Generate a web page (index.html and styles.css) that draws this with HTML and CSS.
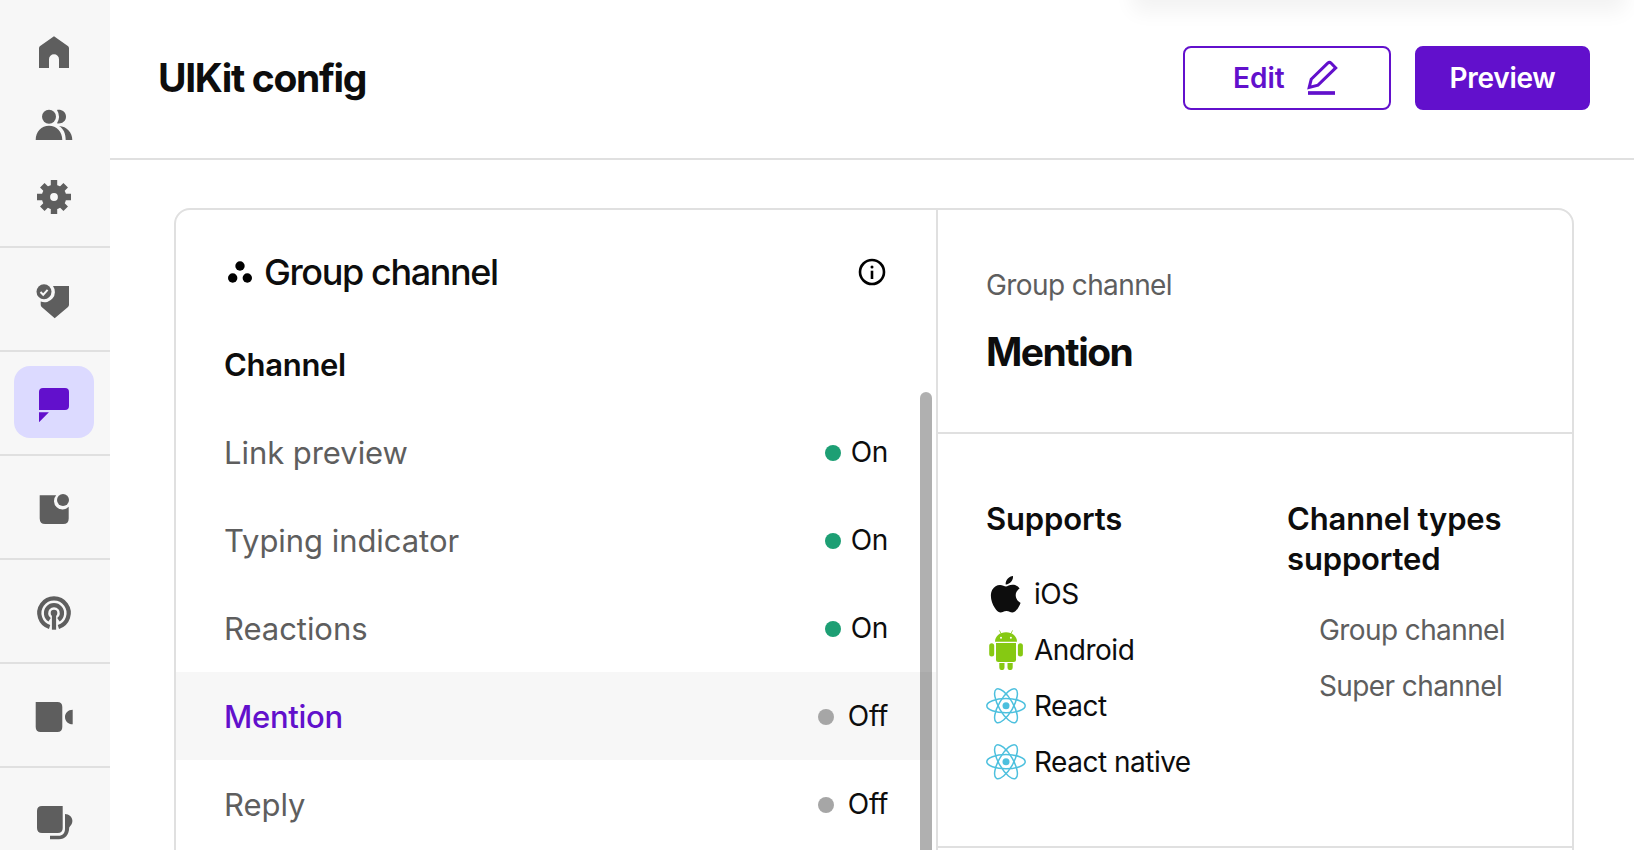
FILE: index.html
```html
<!DOCTYPE html>
<html lang="en">
<head>
<meta charset="utf-8">
<title>UIKit config</title>
<link rel="stylesheet" href="styles.css">
</head>
<body>
<svg class="defs" width="0" height="0" aria-hidden="true">
  <symbol id="react" viewBox="0 0 40 40">
    <g fill="none" stroke="#4dc0de" stroke-width="1.5">
      <ellipse cx="20" cy="19.7" rx="19.2" ry="7.1"/>
      <ellipse cx="20" cy="19.7" rx="19.2" ry="7.1" transform="rotate(60 20 19.7)"/>
      <ellipse cx="20" cy="19.7" rx="19.2" ry="7.1" transform="rotate(120 20 19.7)"/>
    </g>
    <circle cx="20" cy="19.7" r="3.5" fill="#4dc0de"/>
  </symbol>
</svg>
<div class="app">
  <nav class="sidebar">
    <div class="nav-group nav-group-first">
      <a class="nav-item"><svg class="icon" viewBox="0 0 40 40"><path d="M20 4.3 34.2 14.2Q35 15 35 16.2V36H25V27.3a5 5 0 0 0-10 0V36H5V16.2Q5 15 5.8 14.2z"/></svg></a>
      <a class="nav-item"><svg class="icon" viewBox="0 0 40 40"><circle cx="15" cy="12.7" r="7"/><path d="M1.7 36C1.7 27.5 7.5 21.7 15 21.7S28.3 27.5 28.3 36zM23 6C27.500 5.200 32 8 32 12.700S27.500 20.200 23 19.200Q27 12.700 23 6zM25 21.900C33 22.300 38.300 28.500 38.300 36H31.700C31.700 29.500 29.500 24.500 25 21.900z"/></svg></a>
      <a class="nav-item"><svg class="icon" viewBox="0 0 40 40"><g fill="none" stroke="#5e5e5e"><circle cx="20" cy="21" r="8.100" stroke-width="8.400"/><path stroke-width="6.400" d="M20 4v7M20 31v7M3 21h7M30 21h7M8.300 9.300l4 4M27.700 28.700l4 4M31.700 9.300l-4 4M12.300 28.700l-4 4"/></g></svg></a>
    </div>
    <div class="nav-group"><a class="nav-item"><svg class="icon" viewBox="0 0 40 40"><path d="M19 8H35V26.500Q35 28 34 29L20.700 40.300 7.700 29Q6.700 28 6.700 26.500V23.500A10.300 10.300 0 0 0 19 8z"/><circle cx="10" cy="13.700" r="7.500"/><path d="M6.500 14 9.200 16.700 13.600 11.800" fill="none" stroke="#f7f7f7" stroke-width="2"/></svg></a></div>
    <div class="nav-group"><a class="nav-item nav-item-active"><svg class="icon" viewBox="0 0 40 40"><path d="M9 6H31Q35 6 35 10V24Q35 28 31 28H5V10Q5 6 9 6zM5 30.300H14.900L5 40.300z"/></svg></a></div>
    <div class="nav-group"><a class="nav-item"><svg class="icon" viewBox="0 0 40 40"><path d="M5.700 9.300H22.200A8.200 8.200 0 0 0 34.700 20.700V32.500Q34.700 38 29.200 38H11.200Q5.700 38 5.700 32.500z"/><circle cx="29" cy="14" r="6"/></svg></a></div>
    <div class="nav-group"><a class="nav-item"><svg class="icon" viewBox="0 0 40 40"><g fill="none" stroke="#5e5e5e"><path stroke-width="4.200" d="M15.600 37.100A14.700 14.700 0 1 1 24.400 37.100"/><path stroke-width="4.200" d="M15.600 29.800A8 8 0 1 1 24.400 29.800"/><path stroke-width="4.200" d="M20 23V39.700"/></g><circle cx="20" cy="23" r="3.300"/></svg></a></div>
    <div class="nav-group"><a class="nav-item"><svg class="icon" viewBox="0 0 40 40"><path d="M1.700 8H23.300Q28.300 8 28.300 13V33Q28.300 38 23.300 38H6.700Q1.700 38 1.700 33zM38.700 15.700V30.300C34 30.300 31 27 31 23S34 15.700 38.700 15.700z"/></svg></a></div>
    <div class="nav-group"><a class="nav-item"><svg class="icon" viewBox="0 0 40 40"><path d="M8 8H28.700V30Q28.700 35 23.700 35H8Q3 35 3 30V13Q3 8 8 8zM31 16C35 16 38.400 19 38.400 23 38.400 26 36.500 27.500 35.200 29.500 35 37 31 41.200 25 41.200H16V37.800H24.500C28.500 37.800 31 35 31 31z"/></svg></a></div>
  </nav>

  <div class="page">
    <header class="header">
      <h1 class="title">UIKit config</h1>
      <button class="btn btn-outline"><span>Edit</span>
        <svg class="btn-icon" viewBox="0 0 40 40"><g fill="none" stroke="#6210cc"><path stroke-width="3" d="M6.200 29.400 8.200 21.300 24.700 5.100Q26.600 3.600 28.200 5.300L32.700 9.900 15 27.100z"/><path stroke-width="3.700" d="M5 35H32"/></g></svg>
      </button>
      <button class="btn btn-solid">Preview</button>
    </header>
    <main class="content">
      <div class="card">
        <section class="list-panel">
          <div class="list-head">
            <svg class="group-icon" viewBox="0 0 32 32"><circle cx="16" cy="10" r="4.700"/><circle cx="8.700" cy="22" r="4.700"/><circle cx="23.300" cy="22" r="4.700"/></svg>
            <h2 class="list-title">Group channel</h2>
            <svg class="info-icon" viewBox="0 0 32 32"><circle cx="16" cy="16" r="12" fill="none" stroke="#000" stroke-width="2.600"/><circle cx="16" cy="11" r="1.500"/><path d="M14.700 14.700h2.600V23h-2.600z"/></svg>
          </div>
          <h3 class="list-subtitle">Channel</h3>
          <ul class="rows">
            <li class="row"><span class="name">Link preview</span><span class="status on">On</span></li>
            <li class="row"><span class="name">Typing indicator</span><span class="status on">On</span></li>
            <li class="row"><span class="name">Reactions</span><span class="status on">On</span></li>
            <li class="row row-active"><span class="name">Mention</span><span class="status off">Off</span></li>
            <li class="row"><span class="name">Reply</span><span class="status off">Off</span></li>
          </ul>
          <div class="scrollbar"></div>
        </section>
        <section class="detail">
          <div class="detail-head">
            <p class="crumb">Group channel</p>
            <h2 class="detail-title">Mention</h2>
          </div>
          <div class="detail-body">
            <div>
              <h3 class="col-title">Supports</h3>
              <ul class="platforms">
                <li class="platform"><svg class="p-icon" viewBox="0 0 40 40"><path fill="#0d0d0d" transform="translate(1.500 2) scale(1.520)" d="M12.152 6.896c-.948 0-2.415-1.078-3.960-1.040-2.040.027-3.910 1.183-4.961 3.014-2.117 3.675-.546 9.103 1.519 12.090 1.013 1.454 2.208 3.090 3.792 3.039 1.520-.065 2.090-.987 3.935-.987 1.831 0 2.350.987 3.960.948 1.637-.026 2.676-1.480 3.676-2.948 1.156-1.688 1.636-3.325 1.662-3.415-.039-.013-3.182-1.221-3.220-4.857-.026-3.040 2.480-4.494 2.597-4.559-1.429-2.090-3.623-2.324-4.390-2.376-2-.156-3.675 1.090-4.610 1.090zM15.530 3.830c.843-1.012 1.400-2.427 1.245-3.830-1.207.052-2.662.805-3.532 1.818-.780.896-1.454 2.338-1.273 3.714 1.338.104 2.715-.688 3.559-1.701"/></svg>iOS</li>
                <li class="platform"><svg class="p-icon" viewBox="0 0 40 40"><g fill="#86c912"><path d="M9 11.700C9 6.500 13.500 2.300 20 2.300S31 6.500 31 11.700z"/><path d="M13.400.400 15 3.500M26.600.400 25 3.500" stroke="#86c912" stroke-width=".8"/><path d="M10 13H30V29.500Q30 32 27.500 32H12.500Q10 32 10 29.500z"/><rect x="3.200" y="13.300" width="5" height="13.200" rx="2.500"/><rect x="31.900" y="13.300" width="5" height="13.200" rx="2.500"/><path d="M13.300 33h5.200v4.500a2.600 2.600 0 0 1-5.200 0zM21.500 33h5.200v4.500a2.600 2.600 0 0 1-5.200 0z"/></g><circle cx="15" cy="7.700" r="1" fill="#fff"/><circle cx="24.900" cy="7.700" r="1" fill="#fff"/></svg>Android</li>
                <li class="platform"><svg class="p-icon"><use href="#react"/></svg>React</li>
                <li class="platform"><svg class="p-icon"><use href="#react"/></svg>React native</li>
              </ul>
            </div>
            <div>
              <h3 class="col-title">Channel types supported</h3>
              <ul class="types">
                <li class="type">Group channel</li>
                <li class="type">Super channel</li>
              </ul>
            </div>
          </div>
        </section>
      </div>
    </main>
  </div>
</div>
<div class="popover-shadow"></div>
</body>
</html>
```

FILE: styles.css
```css
* { box-sizing: border-box; }
body {
  margin: 0;
  height: 850px;
  overflow: hidden;
  position: relative;
  background: #fff;
  color: #0d0d0d;
  font-family: Inter, "Liberation Sans", sans-serif;
  font-size: 28px;
}
h1, h2, h3, p, ul { margin: 0; padding: 0; }
ul { list-style: none; }
.defs { position: absolute; }
.app { display: flex; height: 850px; overflow: hidden; }

.sidebar { width: 110px; flex: none; background: #f7f7f7; }
.nav-group { border-top: 2px solid #e0e0e0; padding: 14px 0 16px 14px; }
.nav-group-first { border-top: 0; padding: 16px 0 14px 14px; }
.nav-item {
  display: flex;
  align-items: center;
  justify-content: center;
  width: 80px;
  height: 72px;
  border-radius: 16px;
}
.nav-item-active { background: #dcdaff; }
.icon { width: 40px; height: 40px; fill: #5e5e5e; overflow: visible; }
.nav-item-active .icon { fill: #6210cc; }

.page { flex: 1; min-width: 0; }
.header {
  display: flex;
  align-items: center;
  height: 160px;
  padding: 0 44px 2px 48px;
  border-bottom: 2px solid #e0e0e0;
}
.title { flex: 1; padding-bottom: 1px; font-size: 39px; font-weight: 700; line-height: 48px; letter-spacing: -1.35px; }
.btn {
  display: flex;
  align-items: center;
  justify-content: center;
  height: 64px;
  border: 2px solid #6210cc;
  border-radius: 8px;
  font: 600 28px/40px Inter, "Liberation Sans", sans-serif;
}
.btn-outline {
  width: 208px;
  margin-right: 24px;
  padding: 0 46px 0 48px;
  justify-content: space-between;
  background: #fff;
  color: #6210cc;
}
.btn-solid { width: 175px; padding: 0; background: #6210cc; color: #fff; letter-spacing: -0.25px; }
.btn-icon { width: 40px; height: 40px; flex: none; }

.content { padding: 48px 60px 0 64px; }
.card {
  display: flex;
  height: 900px;
  border: 2px solid #e0e0e0;
  border-radius: 16px;
  overflow: hidden;
}
.list-panel { position: relative; width: 762px; flex: none; border-right: 2px solid #e0e0e0; }
.list-head { display: flex; align-items: center; height: 124px; padding: 0 48px; }
.group-icon { width: 32px; height: 32px; margin-right: 8px; }
.list-title { flex: 1; font-size: 36px; font-weight: 500; line-height: 48px; letter-spacing: -1.4px; }
.info-icon { width: 32px; height: 32px; }
.list-subtitle { padding: 11px 48px 0; height: 74px; font-size: 31px; font-weight: 600; line-height: 40px; letter-spacing: -0.3px; }
.rows { color: #5e5e5e; }
.row { display: flex; align-items: center; justify-content: space-between; height: 88px; padding: 0 48px; }
.row-active { background: #f7f7f7; color: #6210cc; }
.name { padding-top: 2px; font-size: 31px; line-height: 40px; letter-spacing: -0.05px; }
.row-active .name { font-weight: 500; letter-spacing: -0.3px; }
.status { display: flex; align-items: center; color: #0d0d0d; font-size: 28px; line-height: 40px; letter-spacing: -0.3px; }
.status::before { content: ""; width: 16px; height: 16px; margin: 2px 10px 0 0; border-radius: 50%; background: #1d9f74; }
.off::before { margin-right: 14px; background: #a6a6a6; }
.scrollbar {
  position: absolute;
  top: 182px;
  right: 4px;
  width: 12px;
  height: 1000px;
  border-radius: 6px;
  background: rgba(0, 0, 0, 0.31);
}

.detail { flex: 1; }
.detail-head { height: 224px; padding: 55px 48px 0; border-bottom: 2px solid #e0e0e0; }
.crumb { color: #5e5e5e; line-height: 40px; letter-spacing: -0.6px; }
.detail-title { margin-top: 23px; font-size: 39px; font-weight: 700; line-height: 48px; letter-spacing: -1.5px; }
.detail-body {
  display: grid;
  grid-template-columns: 1fr 1fr;
  gap: 64px;
  height: 414px;
  padding: 65px 48px 0;
  border-bottom: 2px solid #e0e0e0;
}
.col-title { font-size: 31px; font-weight: 600; line-height: 40px; letter-spacing: -0.15px; }
.platforms { display: grid; gap: 16px; margin-top: 35px; }
.platform { display: flex; align-items: center; gap: 8px; height: 40px; line-height: 40px; letter-spacing: -0.5px; white-space: nowrap; }
.p-icon { width: 40px; height: 40px; flex: none; }
.types { display: grid; gap: 16px; margin-top: 31px; padding-left: 32px; color: #5e5e5e; }
.type { line-height: 40px; letter-spacing: -0.6px; white-space: nowrap; }

.popover-shadow {
  position: absolute;
  top: -100px;
  left: 1132px;
  width: 494px;
  height: 98px;
  border-radius: 8px;
  box-shadow: 0 14px 20px rgba(0, 0, 0, 0.05);
}
```
